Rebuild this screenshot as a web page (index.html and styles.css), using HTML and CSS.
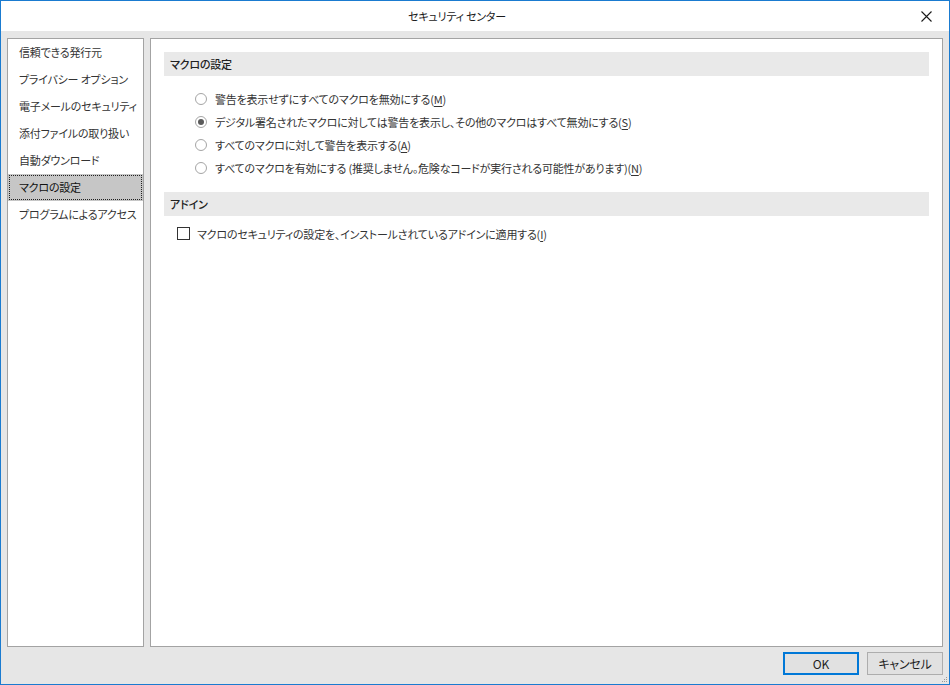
FILE: index.html
```html
<!DOCTYPE html>
<html lang="ja">
<head>
<meta charset="utf-8">
<title>セキュリティ センター</title>
<link rel="stylesheet" href="styles.css">
</head>
<body>
<div class="window">
  <div class="titlebar">
    <span class="title">セキュリティ センター</span>
    <span class="close">
      <svg width="11" height="11" viewBox="0 0 11 11"><path d="M0.5 0.5 L10.5 10.5 M10.5 0.5 L0.5 10.5" stroke="#1a1a1a" stroke-width="1.1" fill="none"/></svg>
    </span>
  </div>
  <div class="body">
    <div class="panels">
      <ul class="nav">
        <li class="nav-item">信頼できる発行元</li>
        <li class="nav-item">プライバシー オプション</li>
        <li class="nav-item">電子メールのセキュリティ</li>
        <li class="nav-item">添付ファイルの取り扱い</li>
        <li class="nav-item">自動ダウンロード</li>
        <li class="nav-item selected"><span class="focus">マクロの設定</span></li>
        <li class="nav-item">プログラムによるアクセス</li>
      </ul>
      <div class="content">
        <div class="section-head">マクロの設定</div>
        <div class="radios">
          <div class="opt"><span class="radio"></span><span class="label">警告を表示せずにすべてのマクロを無効にする(<u>M</u>)</span></div>
          <div class="opt"><span class="radio checked"></span><span class="label">デジタル署名されたマクロに対しては警告を表示し、その他のマクロはすべて無効にする(<u>S</u>)</span></div>
          <div class="opt"><span class="radio"></span><span class="label">すべてのマクロに対して警告を表示する(<u>A</u>)</span></div>
          <div class="opt"><span class="radio"></span><span class="label">すべてのマクロを有効にする (推奨しません。危険なコードが実行される可能性があります)(<u>N</u>)</span></div>
        </div>
        <div class="section-head second">アドイン</div>
        <div class="checks">
          <div class="opt"><span class="checkbox"></span><span class="label">マクロのセキュリティの設定を、インストールされているアドインに適用する(<u>I</u>)</span></div>
        </div>
      </div>
    </div>
    <div class="footer">
      <button class="btn primary">OK</button>
      <button class="btn">キャンセル</button>
    </div>
    <span class="grip">
      <svg width="6" height="6" viewBox="0 0 6 6" fill="#9a9a9a"><rect x="4" y="0" width="1" height="1"/><rect x="2" y="2" width="1" height="1"/><rect x="4" y="2" width="1" height="1"/><rect x="0" y="4" width="1" height="1"/><rect x="2" y="4" width="1" height="1"/><rect x="4" y="4" width="1" height="1"/></svg>
    </span>
  </div>
</div>
</body>
</html>
```

FILE: styles.css
```css
* { box-sizing: border-box; }
html, body { margin: 0; padding: 0; }
body {
  width: 950px;
  height: 685px;
  font-family: "Noto Sans CJK JP", "Noto Sans", sans-serif;
  font-size: 11px;
  letter-spacing: -0.2px;
  font-feature-settings: "palt";
  color: #1e1e1e;
  background: #e6e6e6;
  overflow: hidden;
}
.window {
  width: 950px;
  height: 685px;
  border: 1px solid #1a7bd0;
  display: flex;
  flex-direction: column;
  background: #e6e6e6;
}
.titlebar {
  height: 30px;
  background: #fff;
  position: relative;
  display: flex;
  align-items: center;
  justify-content: center;
  padding-right: 36px;
  flex-shrink: 0;
}
.title {
  color: #1a1a1a;
}
.close {
  position: absolute;
  right: 17px;
  top: 10px;
  width: 11px;
  height: 11px;
  display: block;
}
.close svg { display: block; }
.body {
  flex: 1;
  display: flex;
  flex-direction: column;
  padding: 7px 6px 0 6px;
  position: relative;
}
.panels {
  display: flex;
  gap: 6px;
  height: 609px;
}
.nav {
  list-style: none;
  margin: 0;
  padding: 0;
  width: 137px;
  background: #fff;
  border: 1px solid #a3a3a3;
}
.nav-item {
  height: 27px;
  line-height: 27px;
  padding-left: 11px;
  white-space: nowrap;
  color: #333;
}
.nav-item.selected {
  background: #c6c6c6;
  padding: 1px;
  color: #111;
}
.focus {
  display: block;
  height: 25px;
  line-height: 23px;
  border: 1px dotted #222;
  padding-left: 9px;
}
.content {
  flex: 1;
  background: #fff;
  border: 1px solid #a3a3a3;
  padding: 13px 13px 0 13px;
}
.section-head {
  height: 24px;
  line-height: 24px;
  background: #e9e9e9;
  padding-left: 6px;
  color: #222;
  font-weight: 500;
}
.section-head.second { margin-top: 13px; }
.radios {
  margin-top: 11px;
  padding-left: 31px;
}
.opt {
  height: 23px;
  display: flex;
  align-items: center;
  white-space: nowrap;
}
.label { color: #333; }
.label u { text-underline-offset: 2px; }
.radio {
  width: 12px;
  height: 12px;
  border: 1px solid #a5a5a5;
  border-radius: 50%;
  margin-right: 8px;
  flex-shrink: 0;
  position: relative;
}
.radio.checked::after {
  content: "";
  position: absolute;
  left: 2px;
  top: 2px;
  width: 6px;
  height: 6px;
  border-radius: 50%;
  background: #5a5a5a;
}
.checks {
  margin-top: 6px;
  padding-left: 13px;
}
.checkbox {
  width: 13px;
  height: 13px;
  border: 1px solid #333;
  margin-right: 7px;
  flex-shrink: 0;
}
.footer {
  display: flex;
  justify-content: flex-end;
  gap: 8px;
  margin-top: 5px;
}
.btn {
  width: 76px;
  height: 23px;
  font-family: inherit;
  font-size: 12px;
  letter-spacing: -0.2px;
  font-feature-settings: "palt";
  color: #1e1e1e;
  background: #e1e1e1;
  border: 1px solid #adadad;
  padding: 0;
  margin: 0;
}
.btn.primary {
  border: 2px solid #0078d7;
}
.grip {
  position: absolute;
  right: 1px;
  bottom: 1px;
  width: 6px;
  height: 6px;
}
.grip svg { display: block; }
```
